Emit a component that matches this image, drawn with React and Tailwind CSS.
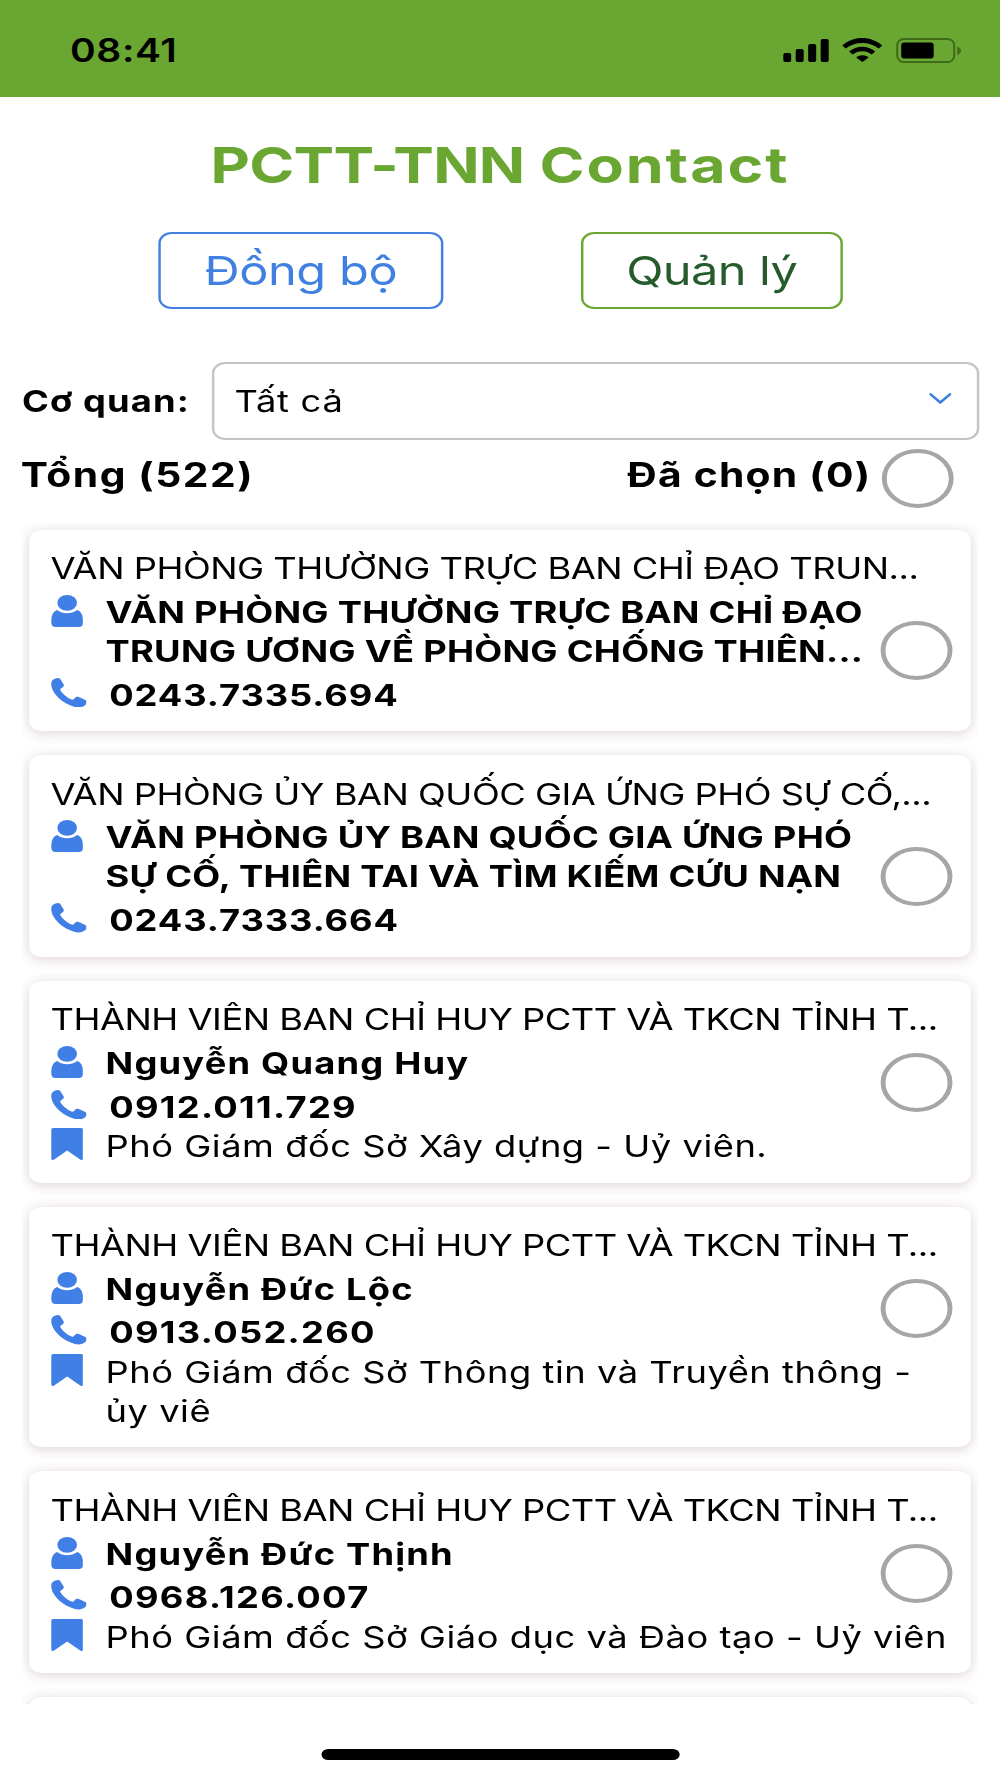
const contacts = [
  {
    group: 'VĂN PHÒNG THƯỜNG TRỰC BAN CHỈ ĐẠO TRUN...',
    name: ['VĂN PHÒNG THƯỜNG TRỰC BAN CHỈ ĐẠO', 'TRUNG ƯƠNG VỀ PHÒNG CHỐNG THIÊN...'],
    phone: '0243.7335.694',
  },
  {
    group: 'VĂN PHÒNG ỦY BAN QUỐC GIA ỨNG PHÓ SỰ CỐ,...',
    name: ['VĂN PHÒNG ỦY BAN QUỐC GIA ỨNG PHÓ', 'SỰ CỐ, THIÊN TAI VÀ TÌM KIẾM CỨU NẠN'],
    phone: '0243.7333.664',
  },
  {
    group: 'THÀNH VIÊN BAN CHỈ HUY PCTT VÀ TKCN TỈNH T...',
    name: ['Nguyễn Quang Huy'],
    phone: '0912.011.729',
    role: ['Phó Giám đốc Sở Xây dựng - Uỷ viên.'],
  },
  {
    group: 'THÀNH VIÊN BAN CHỈ HUY PCTT VÀ TKCN TỈNH T...',
    name: ['Nguyễn Đức Lộc'],
    phone: '0913.052.260',
    role: ['Phó Giám đốc Sở Thông tin và Truyền thông -', 'ủy viê'],
  },
  {
    group: 'THÀNH VIÊN BAN CHỈ HUY PCTT VÀ TKCN TỈNH T...',
    name: ['Nguyễn Đức Thịnh'],
    phone: '0968.126.007',
    role: ['Phó Giám đốc Sở Giáo dục và Đào tạo - Uỷ viên'],
  },
]

function PersonIcon() {
  return (
    <svg viewBox="0 0 32 32" preserveAspectRatio="none" className="mt-[2px] h-8 w-[26.3px] shrink-0 fill-[#4080e6]">
      <ellipse cx="16" cy="7.9" rx="9.8" ry="7.9" />
      <path d="M6 15C9 17.300 12.500 18.200 16 18.200s7-.9 10-3.200C30.500 16.500 32 21.500 32 27c0 3.300-1.500 5-4.500 5h-23C1.500 32 0 30.300 0 27c0-5.500 1.500-10.500 6-12z" />
    </svg>
  )
}

function PhoneIcon() {
  return (
    <svg viewBox="0 0 36 30" preserveAspectRatio="none" className="mt-[2px] h-[29.5px] w-[29.3px] shrink-0 fill-[#4080e6]">
      <path d="M2 1.800C4 .3 7.500-.6 9 .8l3.500 5.500c.8 1.500 0 2.600-1.500 3.500-1.800 1-2.300 1.600-1.500 3 2 3.300 6.500 7.200 10.500 8.900 1.700.7 2.500.2 3.700-1.200 1-1.200 2.500-1.900 4.300-1.200l6.500 3c1.800 1 1.700 3.500 0 5.200-2.500 2.300-6.500 3-10.500 2C12.500 26.500 2.500 18 .2 8.500-.4 5.500.2 3 2 1.800z" />
    </svg>
  )
}

function BookmarkIcon() {
  return (
    <svg viewBox="0 0 32 32" preserveAspectRatio="none" className="mt-[1.5px] h-8 w-[26.3px] shrink-0 fill-[#4080e6]">
      <path d="M2 0h28a2 2 0 0 1 2 2v28.500c0 1.500-1.800 2-3 1L16 22.500 3 31.500c-1.200 1-3 .5-3-1V2a2 2 0 0 1 2-2z" />
    </svg>
  )
}

function Radio({ className = '' }) {
  return <span className={`block h-[59px] w-[59px] shrink-0 rounded-full border-4 border-[#a6a6a6] ${className}`} />
}

function ContactCard({ contact }) {
  return (
    <div className="rounded-[10px] bg-white pt-[19.4px] pr-[15.2px] pb-[16.4px] pl-[17.7px] shadow-[0_2px_12px_rgba(90,30,30,0.2)]">
      <div className="mb-[4.5px] -ml-[0.4px] tracking-[-0.4px] whitespace-nowrap">{contact.group}</div>
      <div className="flex items-center justify-between">
        <div className="font-bold whitespace-nowrap">
          <div className="flex">
            <PersonIcon />
            <div className={`ml-[18.5px] ${contact.role ? 'tracking-[0.98px]' : 'tracking-[0.2px]'}`}>
              {contact.name.map((line) => <div key={line}>{line}</div>)}
            </div>
          </div>
          <div className="mt-[4.6px] flex">
            <PhoneIcon />
            <div className={`ml-[18.5px] ${contact.role ? 'tracking-[1.07px]' : 'tracking-[0.75px]'}`}>{contact.phone}</div>
          </div>
        </div>
        <Radio className="mb-[6px]" />
      </div>
      {contact.role && (
        <div className="flex tracking-[0.43px] whitespace-nowrap">
          <BookmarkIcon />
          <div className="ml-[18.5px]">
            {contact.role.map((line) => <div key={line}>{line}</div>)}
          </div>
        </div>
      )}
    </div>
  )
}

function StatusBar() {
  return (
    <div className="flex h-[96.5px] items-start justify-between bg-[#6aa632] pr-[31.5px] pl-[57.5px] text-black">
      <div className="mt-[31px] text-[32px] leading-[39px] font-semibold tracking-[0.5px]">08:41</div>
      <div className="mt-[38px] flex">
        <svg viewBox="0 0 178 25" preserveAspectRatio="none" className="h-[25px] w-[146.2px]">
          <rect x="0" y="15" width="8" height="9" rx="2" />
          <rect x="12.500" y="11" width="8" height="13" rx="2" />
          <rect x="25" y="6" width="8" height="18" rx="2" />
          <rect x="37.500" y="1" width="8" height="23" rx="2" />
          <path d="M59 7.500C70-2.500 88-2.500 99 7.500l-3.500 3C87 3 71 3 62.500 10.500z" />
          <path d="M66 13.500c7-6.500 19-6.500 26 0l-3.500 3c-5-4.500-14-4.500-19 0z" />
          <path d="M73 19.500c3.500-3 9-3 12.500 0L79.200 24z" />
          <rect x="114" y="1" width="57" height="23" rx="6.500" fill="none" stroke="#3f6a17" strokeWidth="2" />
          <rect x="118" y="4.500" width="32.500" height="16" rx="3" />
          <path d="M174 8.500c5 1.500 5 7 0 8.500z" fill="#3f6a17" />
        </svg>
      </div>
    </div>
  )
}

export default function App() {
  return (
    <div className="h-[1778px] w-[1000px] overflow-hidden bg-white">
      {/* screen is laid out at phone proportions, then widened */}
      <div className="flex h-full w-[821px] origin-left scale-x-[1.218] flex-col font-['Inter','Noto_Sans',sans-serif] text-[29.8px] leading-[39.2px] text-black">
        <StatusBar />

        <h1 className="mt-[38.5px] text-center text-[50px] leading-[60px] font-bold tracking-[-0.6px] text-[#6aa632]">
          PCTT-TNN <span className="ml-[1px] tracking-[1.6px]">Contact</span>
        </h1>

        <div className="mt-[37px] flex pl-[130px] text-[40px] leading-[48px]">
          <button className="h-[77px] w-[234px] rounded-[11px] border-2 border-[#4080e0] tracking-[-0.35px] text-[#4080e0]">Đồng bộ</button>
          <button className="ml-[112.8px] h-[77px] w-[215px] rounded-[11px] border-2 border-[#6aa632] tracking-[-0.5px] text-[#265c2b]">Quản lý</button>
        </div>

        <div className="mt-[52.5px] flex items-center pl-[18px]">
          <div className="mt-[2px] w-[156px] font-bold tracking-[0.93px] whitespace-nowrap">Cơ quan:</div>
          <div className="flex h-[78.5px] w-[629.5px] items-center justify-between rounded-[11px] border-2 border-[#c4c4c4] pr-[20.3px] pl-[16.5px]">
            <span className="mt-[2px] tracking-[0.6px]">Tất cả</span>
            <svg viewBox="0 0 22 11" preserveAspectRatio="none" className="mb-[5px] h-[11px] w-[18px]" fill="none" stroke="#4080e0" strokeWidth="2.600" strokeLinecap="round">
              <path d="M1.200 1.200 11 9.500l9.800-8.300" />
            </svg>
          </div>
        </div>

        <div className="flex h-[82.5px] items-start pr-[37.7px] pl-[17px] text-[33.5px] leading-[40px] font-bold whitespace-nowrap">
          <div className="mt-[15px] tracking-[1.25px]">Tổng (522)</div>
          <div className="mt-[15px] ml-auto tracking-[1px]">Đã chọn (0)</div>
          <Radio className="mt-[8.5px] ml-[9px]" />
        </div>

        <div className="mx-[17.7px] flex h-[1181px] shrink-0 flex-col gap-[24px] overflow-hidden px-[6.5px] pt-[7px]">
          {contacts.map((c) => <ContactCard key={c.phone} contact={c} />)}
          <div className="h-[60px] shrink-0 rounded-[10px] bg-white shadow-[0_2px_12px_rgba(90,30,30,0.2)]" />
        </div>

        <div className="mx-auto mt-[45px] h-[11px] w-[294px] rounded-full bg-black" />
      </div>
    </div>
  )
}
